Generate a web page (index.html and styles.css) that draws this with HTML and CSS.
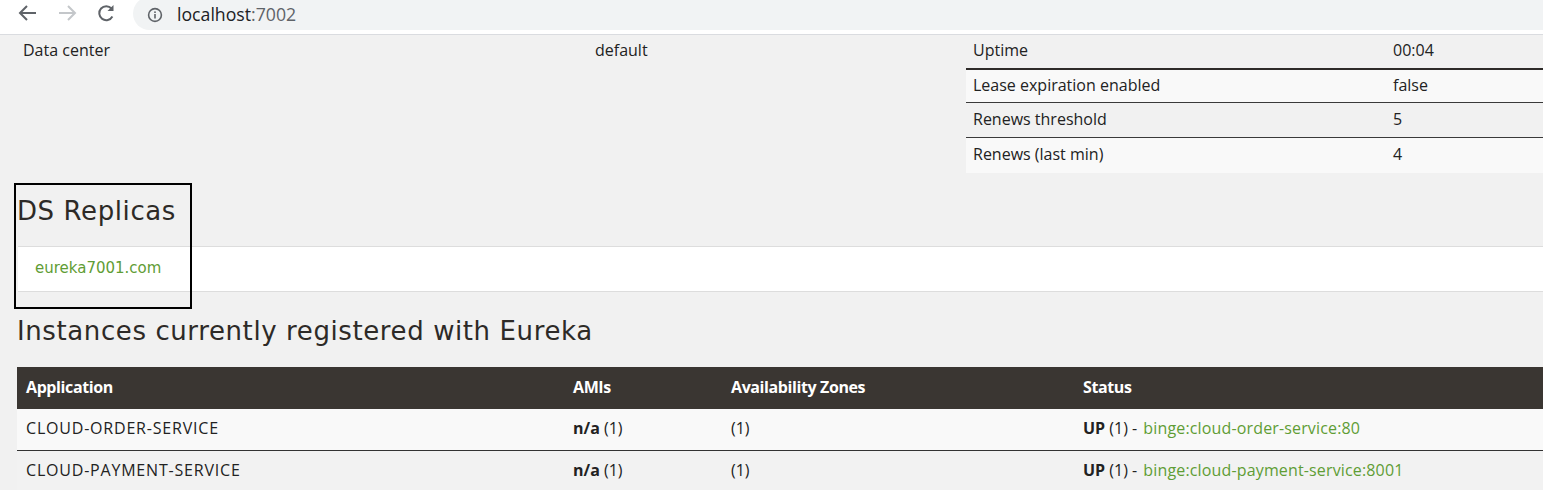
FILE: index.html
```html
<!DOCTYPE html>
<html lang="en">
<head>
<meta charset="utf-8">
<title>Eureka</title>
<link rel="stylesheet" href="styles.css">
</head>
<body>
<div class="chrome">
  <div class="nav">
    <svg class="nav-icon" width="24" height="24" viewBox="0 0 24 24"><path d="M20 12H5M11 5l-7 7 7 7" fill="none" stroke="#5f6368" stroke-width="2"/></svg>
    <svg class="nav-icon" width="24" height="24" viewBox="0 0 24 24"><path d="M4 12h15M13 5l7 7-7 7" fill="none" stroke="#c4c7ca" stroke-width="2"/></svg>
    <svg class="nav-icon" width="24" height="24" viewBox="0 0 24 24"><path d="M18.4 15.5A7 7 0 1 1 17.5 7.5" fill="none" stroke="#5f6368" stroke-width="2"/><path d="M19.5 4v6h-6z" fill="#5f6368"/></svg>
  </div>
  <div class="omnibox">
    <svg class="info-icon" width="16" height="16" viewBox="0 0 16 16"><circle cx="8" cy="8" r="6.4" fill="none" stroke="#5f6368" stroke-width="1.6"/><rect x="7.2" y="7" width="1.6" height="4.5" fill="#5f6368"/><rect x="7.2" y="4.4" width="1.6" height="1.6" fill="#5f6368"/></svg>
    <span class="host">localhost</span><span class="port">:7002</span>
  </div>
</div>

<div class="page">
  <div class="info">
    <table class="info-left">
      <tr><td class="c1">Data center</td><td>default</td></tr>
    </table>
    <table class="info-right">
      <tr class="r1"><td class="c1">Uptime</td><td>00:04</td></tr>
      <tr class="r2"><td class="c1">Lease expiration enabled</td><td>false</td></tr>
      <tr class="r3"><td class="c1">Renews threshold</td><td>5</td></tr>
      <tr class="r4"><td class="c1">Renews (last min)</td><td>4</td></tr>
    </table>
  </div>

  <h2 class="heading heading-ds">DS Replicas</h2>
  <ul class="replicas">
    <li><a href="#">eureka7001.com</a></li>
  </ul>

  <h2 class="heading heading-inst">Instances currently registered with Eureka</h2>
  <table class="instances">
    <thead>
      <tr><th class="col-app">Application</th><th class="col-ami">AMIs</th><th class="col-az">Availability Zones</th><th>Status</th></tr>
    </thead>
    <tbody>
      <tr class="odd"><td class="app-name">CLOUD-ORDER-SERVICE</td><td><b>n/a</b> (1)</td><td>(1)</td><td><b>UP</b> (1) - <a class="inst-link" href="#">binge:cloud-order-service:80</a></td></tr>
      <tr class="even"><td class="app-name">CLOUD-PAYMENT-SERVICE</td><td><b>n/a</b> (1)</td><td>(1)</td><td><b>UP</b> (1) - <a class="inst-link" href="#">binge:cloud-payment-service:8001</a></td></tr>
    </tbody>
  </table>

  <div class="annotation"></div>
</div>
</body>
</html>
```

FILE: styles.css
```css
html, body {
  margin: 0;
  padding: 0;
  width: 1543px;
  height: 490px;
  overflow: hidden;
  background: #f1f1f1;
  font-family: "Open Sans", "Noto Sans", sans-serif;
  color: #222222;
}

.chrome {
  height: 34px;
  background: #ffffff;
  border-bottom: 1px solid #dadce0;
  display: flex;
  align-items: flex-start;
  overflow: hidden;
}

.nav {
  display: flex;
  gap: 15px;
  padding: 1px 0 0 16px;
}

.nav-icon {
  display: block;
}

.omnibox {
  margin-left: 15px;
  margin-top: -3px;
  height: 33px;
  flex: 1;
  background: #f1f3f4;
  border-radius: 17px 0 0 17px;
  display: flex;
  align-items: center;
  padding-left: 14px;
  font-size: 17.7px;
}

.info-icon {
  display: block;
  margin: 2px 14px 0 0;
}

.host { color: #202124; }
.port { color: #5f6368; }

.page {
  position: relative;
  padding-left: 17px;
  font-size: 16px;
}

.info {
  display: flex;
  align-items: flex-start;
}

.info table {
  border-collapse: collapse;
}

.info-left {
  width: 949px;
  flex: none;
}

.info-left td {
  height: 29px;
  padding: 0 0 4px 6px;
  vertical-align: middle;
}

.info-left td.c1 { width: 566px; }

.info-right {
  flex: 1;
}

.info-right td {
  padding: 0 0 3px 7px;
  vertical-align: middle;
}

.info-right td.c1 { width: 413px; }

.info-right tr.r1 td {
  height: 29px;
  padding-bottom: 4px;
  border-bottom: 2px solid #2e2b29;
}

.info-right tr.r2 td {
  height: 29px;
  background: #f9f9f9;
  border-bottom: 1px solid #3a3a3a;
}

.info-right tr.r3 td {
  height: 31px;
  border-bottom: 1px solid #3a3a3a;
}

.info-right tr.r4 td {
  height: 32px;
  background: #f9f9f9;
}

.heading {
  font-family: "DejaVu Sans", "Open Sans", sans-serif;
  font-weight: 400;
  font-size: 26px;
  line-height: 31px;
  color: #2d2a27;
  margin: 0;
  letter-spacing: 0.6px;
}

.heading-ds { margin-top: 23px; }
.heading-inst { margin-top: 24px; }

.replicas {
  list-style: none;
  margin: 19px 0 0 1px;
  padding: 0;
  background: #ffffff;
  border-top: 1px solid #dddddd;
  border-bottom: 1px solid #dddddd;
}

.replicas li {
  height: 44px;
  line-height: 43px;
  padding-left: 17px;
  font-family: "DejaVu Sans", "Open Sans", sans-serif;
  font-size: 15px;
}

a {
  color: #5f9d35;
  text-decoration: none;
}

.instances {
  margin-top: 20px;
  width: 1526px;
  border-collapse: collapse;
  font-size: 16px;
}

.instances th {
  background: #3a3632;
  color: #ffffff;
  text-align: left;
  font-weight: 700;
  height: 40px;
  padding: 0 0 2px 9px;
  vertical-align: middle;
  letter-spacing: -0.4px;
}

.instances th.col-app { width: 538px; }
.instances th.col-ami { width: 149px; }
.instances th.col-az { width: 343px; }

.instances td {
  height: 37px;
  padding: 0 0 4px 9px;
  vertical-align: middle;
}

.instances td.app-name {
  letter-spacing: 0.8px;
}

.instances .inst-link {
  margin-left: 2px;
  letter-spacing: 0.15px;
}

.instances tr.odd td {
  background: #f9f9f9;
  border-bottom: 1px solid #333333;
}

.instances tr.even td {
  background: #f2f2f2;
}

.instances b { font-weight: 700; }

.annotation {
  position: absolute;
  left: 14px;
  top: 148px;
  width: 174px;
  height: 122px;
  border: 2px solid #000000;
  pointer-events: none;
}
```
